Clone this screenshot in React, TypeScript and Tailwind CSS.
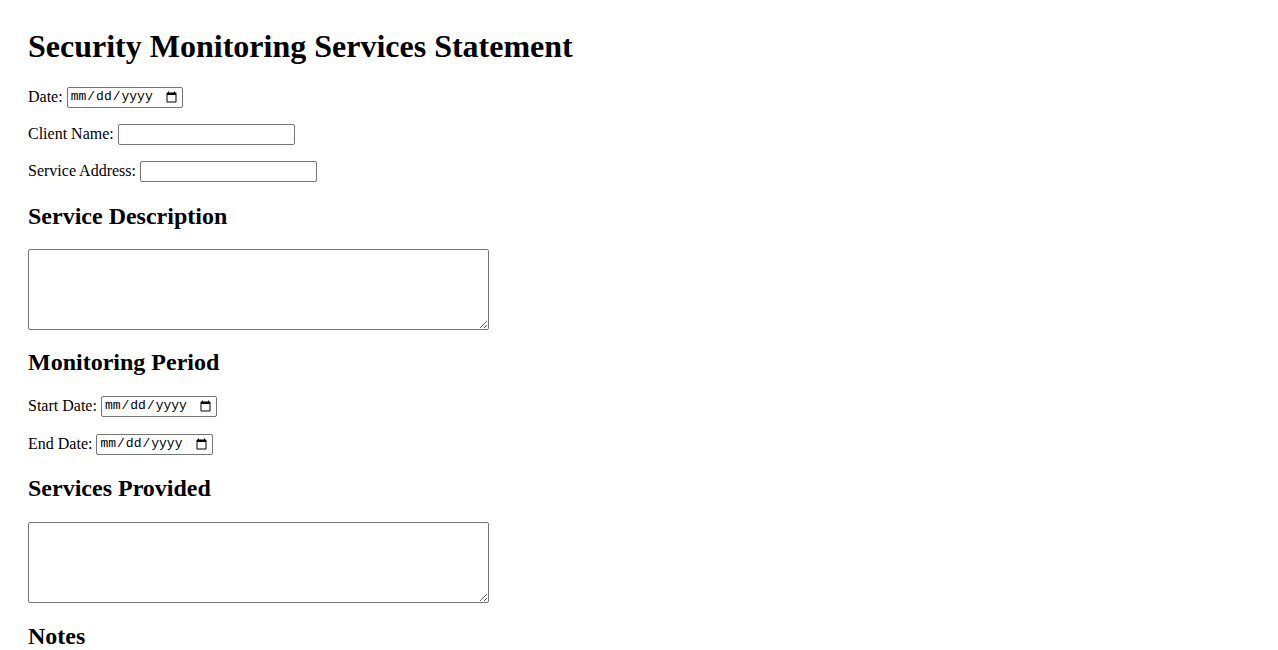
import { useState } from "react";

function Field({
  label,
  type,
  width,
  mt,
}: {
  label: string;
  type: "date" | "text";
  width: string;
  mt: string;
}) {
  const [value, setValue] = useState("");

  return (
    <div className={`flex h-[22px] items-center text-[16px] ${mt}`}>
      <label className="whitespace-pre">{label} </label>
      <input
        type={type}
        value={value}
        onChange={(e) => setValue(e.target.value)}
        className={`h-[21px] rounded-[2px] border border-[#767676] bg-white px-[2px] font-['Liberation_Mono',monospace] text-[13px] text-black ${width}`}
      />
    </div>
  );
}

function Heading({ children, mt }: { children: string; mt: string }) {
  return (
    <h2 className={`h-[28px] text-[24px] leading-[28px] font-bold ${mt}`}>
      {children}
    </h2>
  );
}

export default function App() {
  return (
    <div className="min-h-screen bg-white pt-[28px] pl-[28px] font-['Liberation_Serif',serif] text-black">
      <div className="flex flex-col items-start">
        <h1 className="h-[37px] text-[32px] leading-[37px] font-bold">
          Security Monitoring Services Statement
        </h1>

        <Field label="Date:" type="date" width="w-[116px]" mt="mt-[21px]" />
        <Field label="Client Name:" type="text" width="w-[177px]" mt="mt-[15px]" />
        <Field label="Service Address:" type="text" width="w-[177px]" mt="mt-[15px]" />

        <Heading mt="mt-[20px]">Service Description</Heading>
        <textarea className="mt-[19px] h-[81px] w-[461px] rounded-[2px] border border-[#767676] bg-white p-[2px] font-['Liberation_Mono',monospace] text-[13px]" />

        <Heading mt="mt-[18px]">Monitoring Period</Heading>
        <Field label="Start Date:" type="date" width="w-[116px]" mt="mt-[19px]" />
        <Field label="End Date:" type="date" width="w-[117px]" mt="mt-[16px]" />

        <Heading mt="mt-[19px]">Services Provided</Heading>
        <textarea className="mt-[20px] h-[81px] w-[461px] rounded-[2px] border border-[#767676] bg-white p-[2px] font-['Liberation_Mono',monospace] text-[13px]" />

        <Heading mt="mt-[19px]">Notes</Heading>
        <textarea className="mt-[20px] h-[81px] w-[461px] rounded-[2px] border border-[#767676] bg-white p-[2px] font-['Liberation_Mono',monospace] text-[13px]" />
      </div>
    </div>
  );
}
